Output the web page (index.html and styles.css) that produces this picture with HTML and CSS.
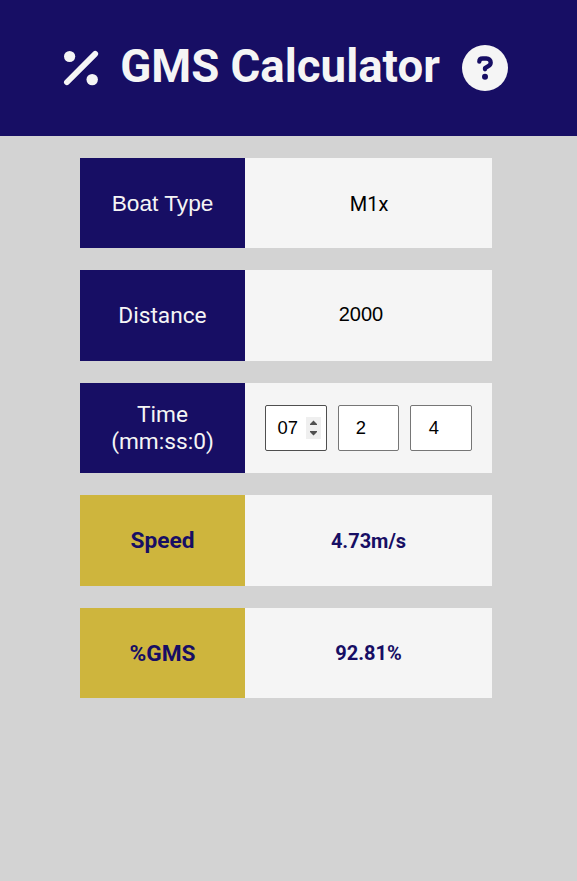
FILE: index.html
```html
<!DOCTYPE html>
<html lang="en">
<head>
<meta charset="utf-8">
<title>GMS Calculator</title>
<link rel="stylesheet" href="styles.css">
</head>
<body>
<header class="header">
  <svg class="percent" viewBox="0 0 34 34" aria-hidden="true">
    <circle cx="5.6" cy="5.5" r="5.6"/>
    <circle cx="28.2" cy="28.6" r="5.7"/>
    <path d="M2.9 31.2 31.2 2.9"/>
  </svg>
  <h1 class="title">GMS Calculator</h1>
  <svg class="help" viewBox="0 0 46 46" aria-label="Help">
    <circle cx="23" cy="23" r="23"/>
    <path d="M17.3 16.7C17.3 14.6 18.8 13.5 20.8 13.5H24.4C27 13.5 28.7 15.2 28.7 17.4C28.7 19.3 27.7 20.4 26.3 21.2L23 23.2V24.3"/>
    <circle class="dot" cx="23" cy="31.7" r="3"/>
  </svg>
</header>
<main class="rows">
  <div class="row"><div class="label arial">Boat Type</div><div class="value boat">M1x</div></div>
  <div class="row"><div class="label">Distance</div><div class="value distance">2000</div></div>
  <div class="row">
    <div class="label">Time<br>(mm:ss:0)</div>
    <div class="value times">
      <div class="field active"><span>07</span>
        <svg class="spinner" viewBox="0 0 15 22" aria-hidden="true"><path d="M4 8V7L7.5 3.5 11 7V8ZM4 14V15L7.5 18.5 11 15V14Z"/></svg>
      </div>
      <div class="field"><span>2</span></div>
      <div class="field"><span>4</span></div>
    </div>
  </div>
  <div class="row result"><div class="label">Speed</div><div class="value">4.73m/s</div></div>
  <div class="row result"><div class="label low">%GMS</div><div class="value">92.81%</div></div>
</main>
</body>
</html>
```
FILE: styles.css
```css
* { box-sizing: border-box; }
body {
  margin: 0;
  min-height: 881px;
  background: #d3d3d3;
  font-family: Roboto, sans-serif;
}
.header {
  height: 136px;
  padding: 0 69px 0 64px;
  display: flex;
  align-items: center;
  justify-content: space-between;
  background: #170e64;
  color: #f5f5f5;
}
.title { margin: 0; font-size: 45.6px; line-height: 54px; font-weight: 700; padding-bottom: 2px; white-space: nowrap; }
.percent { width: 34px; height: 34px; fill: #f5f5f5; overflow: visible; }
.percent path { stroke: #f5f5f5; stroke-width: 5.8; stroke-linecap: round; }
.help { width: 46px; height: 46px; fill: #f5f5f5; }
.help path { fill: none; stroke: #170e64; stroke-width: 4.3; stroke-linecap: round; stroke-linejoin: round; }
.help .dot { fill: #170e64; }
.rows {
  width: 412px;
  margin: 22px 0 0 80px;
  display: grid;
  grid-auto-rows: 90.3px;
  gap: 22.2px;
}
.row { display: grid; grid-template-columns: 165px 247px; }
.label, .value { display: flex; align-items: center; justify-content: center; text-align: center; }
.label { background: #170e64; color: #f5f5f5; font-size: 22.7px; line-height: 27px; }
.arial, .low { padding-top: 1px; }
.arial { font-family: "Liberation Sans", sans-serif; }
.value { background: #f5f5f5; color: #000; font-size: 20px; }
.boat { padding: 1px 0 0 1px; }
.distance { font-family: "Liberation Sans", sans-serif; padding: 0 15px 2px 0; }
.times { display: grid; grid-template-columns: repeat(3, minmax(0, 1fr)); gap: 11px; padding: 0 20px; }
.field {
  height: 46px;
  padding-left: 17px;
  display: flex;
  align-items: center;
  border: 1px solid #767676;
  border-radius: 2px;
  background: #fff;
  font: 18.4px "Liberation Sans", sans-serif;
}
.field:last-child { padding-left: 17.5px; }
.active { padding-left: 11.5px; border-color: #4f4f4f; }
.spinner { flex: none; width: 15px; height: 22px; margin-left: 8px; background: #efefef; fill: #505050; }
.result .label { background: #ceb53d; }
.result .label, .result .value { color: #170e64; font-weight: 700; }
```
